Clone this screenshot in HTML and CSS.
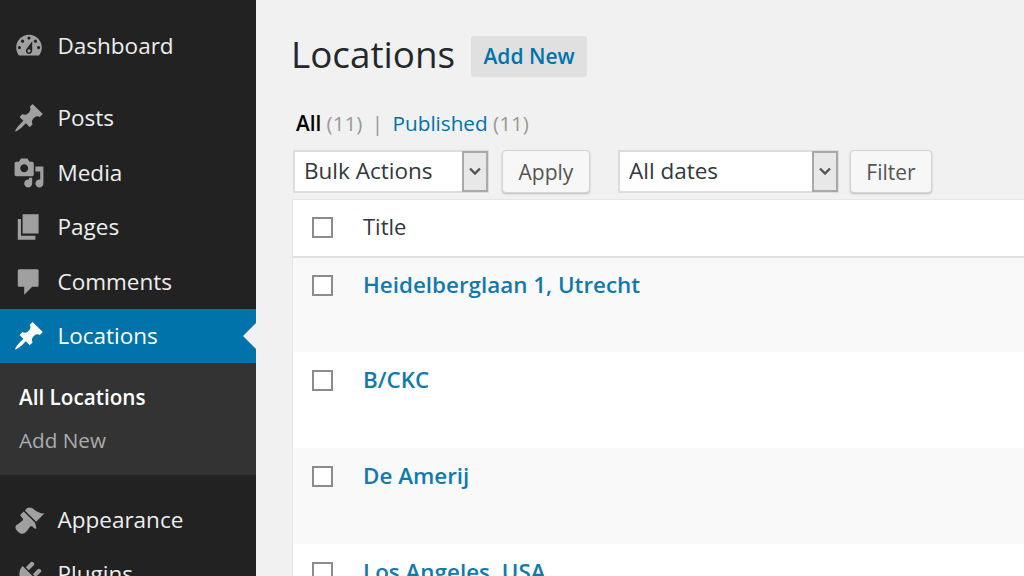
FILE: index.html
```html
<!DOCTYPE html>
<html lang="en">
<head>
    <meta charset="UTF-8">
    <title>Locations</title>
    <link rel="stylesheet" href="styles.css">
</head>
<body>
    <nav class="sidebar">
        <a class="menu-item menu-first">
            <svg class="menu-icon" viewBox="0 0 20 20"><path d="M3.76 16h12.48c1.1-1.37 1.76-3.11 1.76-5 0-4.42-3.58-8-8-8s-8 3.58-8 8c0 1.89.66 3.63 1.76 5zM10 4c.55 0 1 .45 1 1s-.45 1-1 1-1-.45-1-1 .45-1 1-1zM6 6c.55 0 1 .45 1 1s-.45 1-1 1-1-.45-1-1 .45-1 1-1zm8 0c.55 0 1 .45 1 1s-.45 1-1 1-1-.45-1-1 .45-1 1-1zm-5.37 5.55L12 7v6c0 1.1-.9 2-2 2s-2-.9-2-2c0-.57.24-1.08.63-1.45zM4 10c.55 0 1 .45 1 1s-.45 1-1 1-1-.45-1-1 .45-1 1-1zm12 0c.55 0 1 .45 1 1s-.45 1-1 1-1-.45-1-1 .45-1 1-1zm-5 3c0-.55-.45-1-1-1s-1 .45-1 1 .45 1 1 1 1-.45 1-1z"/></svg>
            Dashboard
        </a>
        <div class="menu-sep"></div>
        <a class="menu-item">
            <svg class="menu-icon" viewBox="0 0 20 20"><path d="M10.44 3.02l1.82-1.82 6.36 6.35-1.83 1.82c-1.05-.68-2.48-.57-3.41.36l-.75.75c-.92.93-1.04 2.35-.35 3.41l-1.83 1.82-2.41-2.41-2.8 2.79c-.42.42-3.38 2.71-3.8 2.29s1.86-3.39 2.28-3.81l2.79-2.79L4.1 9.36l1.83-1.82c1.05.69 2.48.57 3.4-.36l.75-.75c.93-.92 1.05-2.35.36-3.41z"/></svg>
            Posts
        </a>
        <a class="menu-item">
            <svg class="menu-icon" viewBox="0 0 20 20"><path d="M13 11V4c0-.55-.45-1-1-1h-1.67L9 1H5L3.67 3H2c-.55 0-1 .45-1 1v7c0 .55.45 1 1 1h10c.55 0 1-.45 1-1zM7 4.5c1.38 0 2.5 1.12 2.5 2.5S8.38 9.5 7 9.5 4.5 8.38 4.5 7 5.62 4.5 7 4.5zM14 6h5v10.5c0 1.38-1.12 2.5-2.5 2.5S14 17.88 14 16.5s1.12-2.5 2.5-2.5c.17 0 .34.02.5.05V9h-3V6zm-4 8.05V13h2v3.5c0 1.38-1.12 2.5-2.5 2.5S7 17.88 7 16.5 8.12 14 9.5 14c.17 0 .34.02.5.05z"/></svg>
            Media
        </a>
        <a class="menu-item">
            <svg class="menu-icon" viewBox="0 0 20 20"><path d="M6 2h10v12H6zM3 5h2v10.5h9V18H3z"/></svg>
            Pages
        </a>
        <a class="menu-item">
            <svg class="menu-icon" viewBox="0 0 20 20"><path d="M4 2h11c.6 0 1 .4 1 1v9c0 .6-.4 1-1 1h-3l-5 5v-5H4c-.6 0-1-.4-1-1V3c0-.6.4-1 1-1z"/></svg>
            Comments
        </a>
        <a class="menu-item menu-current">
            <svg class="menu-icon" viewBox="0 0 20 20"><path d="M10.44 3.02l1.82-1.82 6.36 6.35-1.83 1.82c-1.05-.68-2.48-.57-3.41.36l-.75.75c-.92.93-1.04 2.35-.35 3.41l-1.83 1.82-2.41-2.41-2.8 2.79c-.42.42-3.38 2.71-3.8 2.29s1.86-3.39 2.28-3.81l2.79-2.79L4.1 9.36l1.83-1.82c1.05.69 2.48.57 3.4-.36l.75-.75c.93-.92 1.05-2.35.36-3.41z"/></svg>
            Locations
        </a>
        <div class="submenu">
            <a class="submenu-item submenu-current">All Locations</a>
            <a class="submenu-item">Add New</a>
        </div>
        <a class="menu-item menu-after-sub">
            <svg class="menu-icon" viewBox="0 0 20 20"><path d="M14.48 11.06L7.41 3.99l1.5-1.5c.5-.56 2.3-.47 3.51.32 1.21.8 1.43 1.28 2.91 2.1 1.18.64 2.45 1.26 4.45.85zm-.71.71L6.7 4.7 4.93 6.47c-.39.39-.39 1.02 0 1.41l1.06 1.06c.39.39.39 1.03 0 1.42-.6.6-1.43 1.11-2.21 1.69-.35.26-.7.53-1.01.84C1.43 13.23.78 15 2.95 17.17c2.17 2.17 3.94 1.52 5.28.18.31-.31.58-.66.84-1.01.58-.78 1.09-1.61 1.69-2.21.39-.39 1.03-.39 1.42 0l1.06 1.06c.39.39 1.02.39 1.41 0z"/></svg>
            Appearance
        </a>
        <a class="menu-item">
            <svg class="menu-icon" viewBox="0 0 20 20"><path d="M13.11 4.36L9.87 7.6 8 5.73l3.24-3.24c.35-.34 1.05-.2 1.56.32.52.51.66 1.21.31 1.55zm-8 1.77l.91-1.12 9.01 9.01-1.19.84c-.71.71-2.63 1.16-3.82 1.16H6.14L4.9 17.26c-.59.59-1.54.59-2.12 0-.59-.58-.59-1.53 0-2.12l1.24-1.24v-3.88c0-1.13.4-3.19 1.09-3.89zm7.26 3.97l3.24-3.24c.34-.35 1.04-.21 1.55.31.52.51.66 1.21.31 1.55l-3.24 3.25z"/></svg>
            Plugins
        </a>
    </nav>

    <main class="content">
        <div class="page-head">
            <h1>Locations</h1>
            <a class="add-new">Add New</a>
        </div>

        <div class="views">
            <b>All</b> <span class="count">(11)</span>
            <span class="views-sep">|</span>
            <a>Published</a> <span class="count">(11)</span>
        </div>

        <div class="tablenav">
            <div class="fake-select select-bulk">
                <span class="select-label">Bulk Actions</span>
                <span class="select-arrow"><svg viewBox="0 0 12 8"><path d="M1 1.5l5 5 5-5" /></svg></span>
            </div>
            <button class="btn btn-apply">Apply</button>
            <div class="fake-select select-dates">
                <span class="select-label">All dates</span>
                <span class="select-arrow"><svg viewBox="0 0 12 8"><path d="M1 1.5l5 5 5-5" /></svg></span>
            </div>
            <button class="btn btn-filter">Filter</button>
        </div>

        <div class="list-table">
            <div class="table-head">
                <input type="checkbox" class="check">
                <span class="col-title">Title</span>
            </div>
            <div class="table-row row-alt row-first">
                <input type="checkbox" class="check">
                <a class="row-title">Heidelberglaan 1, Utrecht</a>
            </div>
            <div class="table-row">
                <input type="checkbox" class="check">
                <a class="row-title">B/CKC</a>
            </div>
            <div class="table-row row-alt">
                <input type="checkbox" class="check">
                <a class="row-title">De Amerij</a>
            </div>
            <div class="table-row">
                <input type="checkbox" class="check">
                <a class="row-title">Los Angeles, USA</a>
            </div>
        </div>
    </main>
</body>
</html>
```

FILE: styles.css
```css
html, body {
    margin: 0;
    padding: 0;
    height: 576px;
    overflow: hidden;
}

body {
    display: flex;
    background: #f1f1f1;
    font-family: "Open Sans", sans-serif;
    color: #444;
}

/* sidebar */
.sidebar {
    width: 256px;
    flex-shrink: 0;
    height: 576px;
    overflow: hidden;
    background: #222;
    padding-top: 18.8px;
    box-sizing: border-box;
}

.menu-item {
    position: relative;
    display: flex;
    align-items: center;
    gap: 12.5px;
    height: 54.4px;
    box-sizing: border-box;
    padding-left: 13px;
    padding-bottom: 1px;
    font-size: 22.5px;
    color: #eee;
}

.menu-icon {
    width: 32px;
    height: 32px;
    margin-top: 1px;
    flex-shrink: 0;
    fill: #a0a0a0;
}

.menu-sep {
    height: 18px;
}

.menu-current {
    background: #0073aa;
    color: #fff;
}

.menu-current .menu-icon {
    fill: #fff;
}

.menu-current::after {
    content: "";
    position: absolute;
    right: 0;
    top: 14px;
    border: 13px solid transparent;
    border-right-color: #f1f1f1;
    border-left-width: 0;
}

.submenu {
    height: 112px;
    box-sizing: border-box;
    padding-top: 13px;
    background: #333;
}

.submenu-item {
    display: block;
    height: 43px;
    line-height: 43px;
    padding-left: 19px;
    font-size: 20.7px;
    color: #a9acaf;
}

.submenu-current {
    color: #fff;
    font-weight: 600;
}

.menu-after-sub {
    margin-top: 17.6px;
}

/* main area */
.content {
    flex: 1;
    min-width: 0;
    padding-left: 36px;
}

.page-head {
    display: flex;
    align-items: center;
    gap: 16px;
    height: 41px;
    margin-top: 36px;
}

h1 {
    margin: 0 0 6px -1px;
    font-size: 36.8px;
    font-weight: 400;
    color: #23282d;
}

.add-new {
    display: block;
    width: 116px;
    height: 41px;
    line-height: 41px;
    text-align: center;
    border-radius: 3px;
    background: #e0e0e0;
    color: #0073aa;
    font-size: 21px;
    font-weight: 600;
}

.views {
    margin-top: 32px;
    padding-left: 4px;
    height: 28px;
    line-height: 28px;
    font-size: 20.7px;
    white-space: nowrap;
}

.views b {
    font-weight: 600;
    color: #000;
}

.views a {
    color: #0073aa;
}

.count {
    color: #999;
}

.views-sep {
    margin: 0 4px;
    color: #999;
}

.tablenav {
    display: flex;
    align-items: center;
    margin-top: 12px;
    padding-left: 1px;
    height: 44px;
}

.fake-select {
    display: flex;
    height: 43px;
    box-sizing: border-box;
    border: 2px solid #ddd;
    background: #fff;
}

.select-bulk {
    width: 196px;
}

.select-dates {
    width: 221px;
    margin-left: 28px;
}

.select-label {
    flex: 1;
    padding-left: 9px;
    line-height: 37px;
    font-size: 22.5px;
    color: #32373c;
}

.select-arrow {
    display: flex;
    align-items: center;
    justify-content: center;
    width: 26px;
    box-sizing: border-box;
    border: 2px solid #a9a9a9;
    background: #e8e8e8;
    margin: -1px;
}

.select-arrow svg {
    width: 12px;
    height: 8px;
    fill: none;
    stroke: #555;
    stroke-width: 2.4;
}

.btn {
    height: 43px;
    padding: 2px 0 0;
    border: 1px solid #d4d4d4;
    border-radius: 4px;
    background: #f7f7f7;
    box-shadow: 0 1px 2px #bbb;
    font-family: "Open Sans", sans-serif;
    font-size: 21px;
    color: #555;
}

.btn-apply {
    width: 88px;
    margin-left: 13px;
}

.btn-filter {
    width: 82px;
    margin-left: 11px;
}

/* table */
.list-table {
    margin-top: 6px;
    border: 1px solid #e5e5e5;
    border-right: 0;
    background: #fff;
}

.table-head {
    display: flex;
    align-items: center;
    height: 58px;
    box-sizing: border-box;
    border-bottom: 2px solid #e1e1e1;
    padding-left: 19px;
    padding-bottom: 2px;
}

.table-row {
    display: flex;
    align-items: flex-start;
    height: 96px;
    padding-left: 19px;
    box-sizing: border-box;
    padding-top: 18px;
}

.row-first {
    height: 94px;
    padding-top: 17px;
}

.row-alt {
    background: #f9f9f9;
}

.check {
    appearance: none;
    width: 21px;
    height: 21px;
    margin: 0 30px 0 0;
    flex-shrink: 0;
    box-sizing: border-box;
    border: 2px solid #8c8c8c;
    background: #fff;
}

.col-title {
    margin-bottom: 2px;
    font-size: 22px;
    color: #32373c;
}

.row-title {
    margin-top: -1px;
    font-size: 22.4px;
    line-height: 21px;
    font-weight: 600;
    color: #117aad;
    white-space: nowrap;
}
```
